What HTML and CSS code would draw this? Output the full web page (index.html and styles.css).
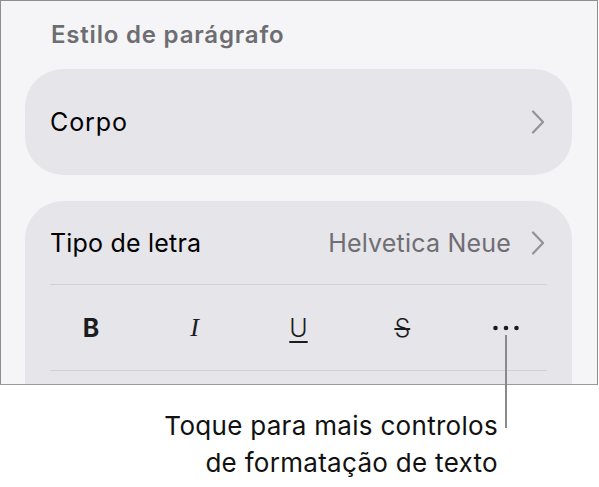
FILE: index.html
```html
<!DOCTYPE html>
<html lang="pt">
<head>
    <meta charset="UTF-8">
    <title>Formato</title>
    <link rel="stylesheet" href="styles.css">
</head>
<body>
    <div class="screen">
        <h2 class="section-title">Estilo de parágrafo</h2>

        <div class="card card-single">
            <div class="row">
                <span class="label">Corpo</span>
                <svg class="chevron" width="14" height="24" viewBox="0 0 14 24">
                    <path d="M2 1.5 L12 12 L2 22.5" />
                </svg>
            </div>
        </div>

        <div class="card card-font">
            <div class="row row-font">
                <span class="label">Tipo de letra</span>
                <span class="value">Helvetica Neue</span>
                <svg class="chevron" width="14" height="24" viewBox="0 0 14 24">
                    <path d="M2 1.5 L12 12 L2 22.5" />
                </svg>
            </div>
            <div class="toolbar">
                <span class="tool tool-bold">B</span>
                <span class="tool tool-italic">I</span>
                <span class="tool tool-underline">U</span>
                <span class="tool tool-strike">S</span>
                <span class="tool tool-more">
                    <svg width="26" height="6" viewBox="0 0 26 6">
                        <circle cx="2.5" cy="3" r="2.3" />
                        <circle cx="13" cy="3" r="2.3" />
                        <circle cx="23.5" cy="3" r="2.3" />
                    </svg>
                </span>
            </div>
            <div class="row row-empty"></div>
        </div>
    </div>

    <div class="callout">
        <span class="callout-line"></span>
        <p class="callout-text">Toque para mais controlos<br>de formatação de texto</p>
    </div>
</body>
</html>
```

FILE: styles.css
```css
* {
    margin: 0;
    padding: 0;
    box-sizing: border-box;
}

body {
    background-color: #ffffff;
    font-family: 'Inter', 'Liberation Sans', sans-serif;
    width: 599px;
    position: relative;
}

.screen {
    width: 598px;
    height: 385px;
    border: 1px solid #8e8e8e;
    border-bottom-color: #9a9a9a;
    background-color: #f5f5f7;
    padding: 19px 24px 0 24px;
    overflow: hidden;
}

.section-title {
    font-size: 24px;
    font-weight: 600;
    line-height: 29px;
    letter-spacing: 0.8px;
    color: #6d6d72;
    padding-left: 26px;
    margin-bottom: 20px;
}

.card {
    width: 547px;
    background-color: #e6e5ea;
    border-radius: 38px;
    padding: 0 25px;
}

.card-single {
    height: 106px;
    display: flex;
    align-items: center;
}

.card-font {
    margin-top: 26px;
    height: 240px;
}

.row {
    display: flex;
    align-items: center;
    width: 100%;
    gap: 20px;
}

.row-font {
    height: 84px;
    border-bottom: 1px solid #d0d0d5;
}

.row-empty {
    border-top: 1px solid #d0d0d5;
}

.label {
    font-size: 25px;
    letter-spacing: 0.2px;
    color: #000000;
    flex: 1;
}

.card-single .label {
    letter-spacing: 0.9px;
}

.value {
    font-size: 25px;
    letter-spacing: 0.2px;
    color: #6e6e73;
}

.chevron {
    fill: none;
    stroke: #929297;
    stroke-width: 2.2;
    stroke-linecap: round;
    stroke-linejoin: round;
    margin-right: 2px;
}

.toolbar {
    display: grid;
    grid-template-columns: repeat(5, 1fr);
    height: 85px;
    margin: 0 -11px;
    align-items: center;
    justify-items: center;
    color: #1c1c1e;
}

.tool {
    font-size: 25px;
    line-height: 30px;
}

.tool-bold {
    font-weight: 700;
}

.tool-italic {
    font-family: 'Liberation Serif', serif;
    font-style: italic;
    font-size: 26px;
}

.tool-underline {
    font-weight: 300;
    text-decoration: underline;
    text-decoration-thickness: 1.5px;
    text-underline-offset: 4px;
}

.tool-strike {
    font-weight: 300;
    text-decoration: line-through;
    text-decoration-thickness: 1.5px;
}

.tool-more svg {
    display: block;
    fill: #1c1c1e;
}

.callout {
    position: relative;
    padding: 22px 101px 0 0;
}

.callout-line {
    position: absolute;
    left: 505px;
    top: -50px;
    width: 2px;
    height: 93px;
    background-color: #8a8a8a;
}

.callout-text {
    font-size: 26px;
    line-height: 37px;
    letter-spacing: 0.3px;
    text-align: right;
    color: #111111;
}
```
